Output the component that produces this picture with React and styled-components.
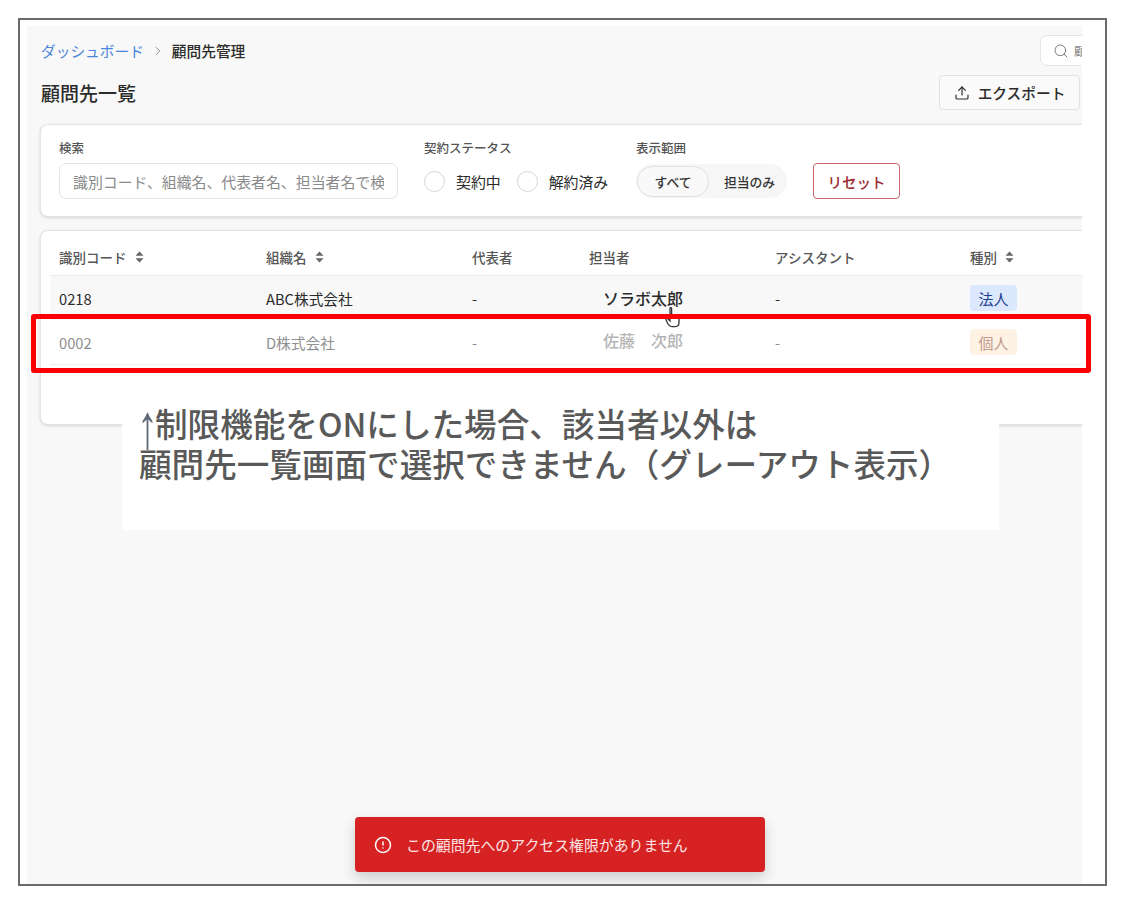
import React from "react";
import styled, { createGlobalStyle } from "styled-components";
import { ChevronRight, Search, Upload, CircleAlert } from "lucide-react";

const GlobalStyle = createGlobalStyle`
  html, body {
    margin: 0;
    padding: 0;
    background: #fff;
  }
  body {
    font-family: "Noto Sans CJK JP", "Noto Sans", sans-serif;
    color: #2b2b2b;
  }
  * {
    box-sizing: border-box;
  }
`;

const Frame = styled.div`
  position: relative;
  width: 1089px;
  height: 868px;
  margin: 18px 0 0 18px;
  padding: 6px 23px 0 7px;
  border: 2px solid #6b6b6b;
  background: #fff;
`;

const Screen = styled.div`
  position: relative;
  height: 858px;
  padding: 9px 1px 0 13px;
  background: #f8f8f8;
  overflow: hidden;
`;

const TopBar = styled.div`
  display: flex;
  align-items: center;
  justify-content: space-between;
  height: 31px;
`;

const Breadcrumb = styled.nav`
  display: flex;
  align-items: center;
  gap: 7px;
  margin-left: 1px;
  font-size: 14.7px;
  font-weight: 500;
  color: #2b2b2b;
  a {
    color: #4b86dc;
    font-weight: 400;
    text-decoration: none;
  }
  svg {
    color: #777;
  }
`;

const SearchBox = styled.div`
  display: flex;
  align-items: center;
  gap: 5px;
  flex: none;
  width: 60px;
  height: 31px;
  margin-right: -19px;
  padding-left: 12px;
  border: 1px solid #e4e4e4;
  border-radius: 7px;
  background: #fff;
  font-size: 12px;
  color: #888;
  white-space: nowrap;
  overflow: hidden;
  svg {
    flex: none;
    color: #777;
  }
`;

const TitleRow = styled.div`
  display: flex;
  align-items: center;
  justify-content: space-between;
  height: 35px;
  margin-top: 9px;
`;

const Title = styled.h1`
  margin: 0 0 0 1px;
  font-size: 19px;
  font-weight: 500;
  color: #2b2b2b;
`;

const ExportButton = styled.button`
  display: flex;
  align-items: center;
  justify-content: center;
  gap: 8px;
  width: 141px;
  height: 35px;
  margin-right: 1px;
  border: 1px solid #e2e2e2;
  border-radius: 4px;
  background: #fafafa;
  font-family: inherit;
  font-size: 14.7px;
  font-weight: 500;
  color: #2b2b2b;
`;

const Card = styled.section`
  width: 1100px;
  border: 1px solid #e4e4e4;
  border-radius: 8px;
  background: #fff;
  box-shadow: 0 1px 3px rgba(0, 0, 0, 0.14);
`;

const FilterCard = styled(Card)`
  display: flex;
  align-items: flex-start;
  height: 93px;
  margin-top: 14px;
  padding: 14px 18px;
`;

const Field = styled.div`
  display: flex;
  flex-direction: column;
  width: ${(p) => p.$width}px;
`;

const Label = styled.label`
  height: 18px;
  margin-bottom: 6px;
  font-size: 12.5px;
  line-height: 18px;
  font-weight: 500;
  color: #555;
`;

const SearchInput = styled.input`
  width: 339px;
  height: 36px;
  padding: 0 13px;
  border: 1px solid #e4e4e4;
  border-radius: 7px;
  background: #fff;
  font-family: inherit;
  font-size: 14.9px;
  color: #2b2b2b;
  &::placeholder {
    color: #8a8a8a;
    opacity: 1;
  }
`;

const RadioRow = styled.div`
  display: flex;
  align-items: center;
  height: 36px;
`;

const RadioItem = styled.span`
  display: flex;
  align-items: center;
  gap: 11px;
  margin-right: 16px;
  font-size: 14.9px;
  color: #2b2b2b;
  white-space: nowrap;
`;

const RadioCircle = styled.i`
  width: 21px;
  height: 21px;
  border: 1px solid #d4d4d4;
  border-radius: 50%;
  background: #fff;
`;

const Toggle = styled.div`
  display: flex;
  align-items: center;
  width: 151px;
  height: 34px;
  margin-top: 1px;
  padding: 1px;
  border-radius: 17px;
  background: #f6f6f6;
`;

const ToggleOption = styled.span`
  display: flex;
  align-items: center;
  justify-content: center;
  width: ${(p) => (p.$active ? 72 : 77)}px;
  height: 31px;
  padding-left: ${(p) => (p.$active ? 0 : 4)}px;
  border-radius: 16px;
  border: ${(p) => (p.$active ? "1px solid #e0e0e0" : "none")};
  background: ${(p) => (p.$active ? "#f9f9f9" : "transparent")};
  font-size: 12.8px;
  font-weight: 500;
  color: #333;
`;

const ResetButton = styled.button`
  width: 87px;
  height: 36px;
  margin: 24px 0 0 26px;
  border: 1px solid #c9666c;
  border-radius: 4px;
  background: #fff;
  font-family: inherit;
  font-size: 14.5px;
  font-weight: 500;
  color: #9c2a30;
`;

const TableCard = styled(Card)`
  height: 195px;
  margin-top: 13px;
  padding: 0 9px;
`;

const Row = styled.div`
  display: grid;
  grid-template-columns: 207px 206px 117px 186px 195px 1fr;
  align-items: center;
  height: ${(p) => p.$height}px;
  padding-left: 9px;
  padding-top: ${(p) => p.$top || 0}px;
  border-bottom: ${(p) => (p.$line ? "1px solid #ebebeb" : "none")};
  background: ${(p) => (p.$hover ? "#f8f8f8" : "transparent")};
  font-size: 14.7px;
  color: ${(p) => (p.$muted ? "#8e8e8e" : "#2b2b2b")};
`;

const HeaderCell = styled.span`
  display: flex;
  align-items: center;
  gap: 8px;
  font-size: 13.5px;
  font-weight: 500;
  color: #555;
`;

const StaffCell = styled.span`
  padding-left: 14px;
  font-size: 16px;
  font-weight: 500;
  color: ${(p) => (p.$muted ? "#b5b5b5" : "#2b2b2b")};
  position: relative;
  top: ${(p) => (p.$muted ? -2 : 0)}px;
`;

const Badge = styled.span`
  display: inline-flex;
  align-items: center;
  justify-content: center;
  width: 47px;
  height: 26px;
  border-radius: 4px;
  background: ${(p) => (p.$kind === "corp" ? "#dbe8fd" : "#fdf2e4")};
  font-size: 15px;
  color: ${(p) => (p.$kind === "corp" ? "#23408f" : "#c39a8c")};
`;

const RedOutline = styled.div`
  position: absolute;
  left: 11px;
  top: 294px;
  width: 1060px;
  height: 59px;
  border: 5px solid #fa0000;
  border-radius: 3px;
  pointer-events: none;
`;

const Note = styled.div`
  position: absolute;
  left: 95px;
  top: 379px;
  width: 877px;
  height: 125px;
  padding-left: 17px;
  background: #fff;
  font-size: 32.6px;
  line-height: 40px;
  font-weight: 500;
  color: #595959;
  white-space: nowrap;
`;

const NoteLines = styled.div`
  margin-top: -2px;
`;

const Arrow = styled.span`
  display: inline-block;
  width: 16px;
  font-family: "Liberation Serif", serif;
  font-size: 42px;
  font-weight: 400;
  line-height: 0;
  text-indent: -2px;
  color: #5f6b78;
  transform: translateY(4px) scaleY(1.5);
`;

const Toast = styled.div`
  position: absolute;
  left: 328px;
  top: 791px;
  display: flex;
  align-items: center;
  gap: 14px;
  width: 410px;
  height: 55px;
  padding-left: 19px;
  border-radius: 4px;
  background: #d62222;
  box-shadow: 0 6px 14px rgba(0, 0, 0, 0.18);
  font-size: 14.9px;
  color: #fbe4e4;
`;

const Cursor = styled.svg`
  position: absolute;
  left: 638px;
  top: 281px;
`;

const SortIcon = () => (
  <svg width="9" height="12" viewBox="0 0 9 12" fill="#666">
    <path d="M4.5 0.5 8.5 4.8H0.5Z" />
    <path d="M4.5 11.5 8.5 7.2H0.5Z" />
  </svg>
);

export default function App() {
  return (
    <>
      <GlobalStyle />
      <Frame>
        <Screen>
          <TopBar>
            <Breadcrumb>
              <a href="#top">ダッシュボード</a>
              <ChevronRight size={14} strokeWidth={1.5} />
              <span>顧問先管理</span>
            </Breadcrumb>
            <SearchBox>
              <Search size={16} strokeWidth={1.5} />
              <span>顧問先</span>
            </SearchBox>
          </TopBar>
          <TitleRow>
            <Title>顧問先一覧</Title>
            <ExportButton>
              <Upload size={16} strokeWidth={1.75} />
              エクスポート
            </ExportButton>
          </TitleRow>

          <FilterCard>
            <Field $width={365}>
              <Label>検索</Label>
              <SearchInput placeholder="識別コード、組織名、代表者名、担当者名で検索" />
            </Field>
            <Field $width={212}>
              <Label>契約ステータス</Label>
              <RadioRow>
                <RadioItem>
                  <RadioCircle />
                  契約中
                </RadioItem>
                <RadioItem>
                  <RadioCircle />
                  解約済み
                </RadioItem>
              </RadioRow>
            </Field>
            <Field $width={151}>
              <Label>表示範囲</Label>
              <Toggle>
                <ToggleOption $active>すべて</ToggleOption>
                <ToggleOption>担当のみ</ToggleOption>
              </Toggle>
            </Field>
            <ResetButton>リセット</ResetButton>
          </FilterCard>

          <TableCard>
            <Row $height={45} $top={7} $line>
              <HeaderCell>
                識別コード <SortIcon />
              </HeaderCell>
              <HeaderCell>
                組織名 <SortIcon />
              </HeaderCell>
              <HeaderCell>代表者</HeaderCell>
              <HeaderCell>担当者</HeaderCell>
              <HeaderCell>アシスタント</HeaderCell>
              <HeaderCell>
                種別 <SortIcon />
              </HeaderCell>
            </Row>
            <Row $height={44} $hover>
              <span>0218</span>
              <span>ABC株式会社</span>
              <span>-</span>
              <StaffCell>ソラボ太郎</StaffCell>
              <span>-</span>
              <span>
                <Badge $kind="corp">法人</Badge>
              </span>
            </Row>
            <Row $height={45} $line $muted>
              <span>0002</span>
              <span>D株式会社</span>
              <span>-</span>
              <StaffCell $muted>佐藤　次郎</StaffCell>
              <span>-</span>
              <span>
                <Badge>個人</Badge>
              </span>
            </Row>
          </TableCard>

          <Cursor width="16" height="22" viewBox="0 0 16 22" fill="#fff" stroke="#333" strokeWidth="1.3">
            <path d="M5 1.5c0-1 1.6-1 1.6 0v6.5l5 1.2c1.6.4 2.4 1.4 2.4 3v3.5c0 2.5-1.8 4-4.5 4H7.5C5 19.7 3.5 18 2.5 16L1 12.8c-.5-1.2 1-1.9 1.8-.9L5 14Z" />
          </Cursor>
          <Note>
            <NoteLines>
              <div>
                <Arrow>↑</Arrow>制限機能をONにした場合、該当者以外は
              </div>
              <div>顧問先一覧画面で選択できません（グレーアウト表示）</div>
            </NoteLines>
          </Note>
          <Toast>
            <CircleAlert size={18} strokeWidth={2} color="#fff" />
            この顧問先へのアクセス権限がありません
          </Toast>
        </Screen>
        <RedOutline />
      </Frame>
    </>
  );
}
